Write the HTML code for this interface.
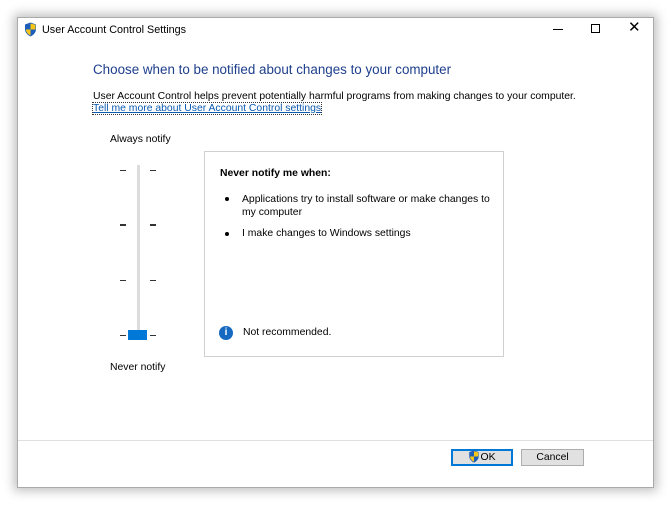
<!DOCTYPE html>
<html><head><style>
body{margin:0;width:671px;height:506px;background:#fff;position:relative;overflow:hidden;font-family:"Liberation Sans",sans-serif;font-size:10.4px;color:#000}
.a{position:absolute;white-space:nowrap}
.win{position:absolute;left:17px;top:17px;width:637px;height:471px;background:#fff;border:1px solid #aaa;box-sizing:border-box;box-shadow:0 0 10px 3px rgba(0,0,0,0.25)}
.tk{position:absolute;height:1px;background:#333;width:6px}
.btn{position:absolute;top:449px;height:17px;width:62px;background:#e1e1e1;border:1px solid #adadad;box-sizing:border-box;text-align:center;font-size:10.4px;line-height:15px}
</style></head><body>
<div class="win"></div>
<svg class="a" style="left:24px;top:22px" width="13" height="15" viewBox="0 0 13 15"><path d="M6.5 0.5 L12 2.5 V7 C12 10.5 9.5 13 6.5 14.5 C3.5 13 1 10.5 1 7 V2.5Z" fill="#1e5eb8"/><path d="M6.5 1.5 V7.5 H11.5 V2.8Z" fill="#f5c518"/><path d="M6.5 7.5 H1.8 C2.3 10.5 4 12.4 6.5 13.5Z" fill="#f5c518"/></svg>
<div class="a" style="left:42px;top:24px;font-size:10.8px">User Account Control Settings</div>
<div class="a" style="left:553px;top:29px;width:10px;height:1px;background:#000"></div>
<div class="a" style="left:591px;top:24px;width:9px;height:9px;border:1px solid #000;box-sizing:border-box"></div>
<div class="a" style="left:628px;top:18px;font-size:15px;line-height:20px">✕</div>
<div class="a" style="left:93px;top:62px;font-size:13.4px;color:#1e3f8c">Choose when to be notified about changes to your computer</div>
<div class="a" style="left:93px;top:91px">User Account Control helps prevent potentially harmful programs from making changes to your computer.</div>
<div class="a" style="left:93px;top:103px;color:#0a58b0;text-decoration:underline;outline:1px dotted #333">Tell me more about User Account Control settings</div>
<div class="a" style="left:110px;top:134px">Always notify</div>
<div class="a" style="left:110px;top:362px">Never notify</div>
<div class="a" style="left:137px;top:165px;width:3px;height:175px;background:#dcdcdc"></div>
<div class="tk" style="left:120px;top:170px"></div><div class="tk" style="left:150px;top:170px"></div>
<div class="tk" style="left:120px;top:224px;height:2px"></div><div class="tk" style="left:150px;top:224px;height:2px"></div>
<div class="tk" style="left:120px;top:280px"></div><div class="tk" style="left:150px;top:280px"></div>
<div class="tk" style="left:120px;top:335px"></div><div class="tk" style="left:150px;top:335px"></div>
<div class="a" style="left:128px;top:330px;width:19px;height:10px;background:#0078d7"></div>
<div class="a" style="left:204px;top:151px;width:300px;height:206px;border:1px solid #d0d0d0;box-sizing:border-box"></div>
<div class="a" style="left:220px;top:168px;font-weight:bold">Never notify me when:</div>
<div class="a" style="left:225px;top:197px;width:4px;height:4px;border-radius:50%;background:#000"></div>
<div class="a" style="left:242px;top:193px;line-height:13px">Applications try to install software or make changes to<br>my computer</div>
<div class="a" style="left:225px;top:232px;width:4px;height:4px;border-radius:50%;background:#000"></div>
<div class="a" style="left:242px;top:228px">I make changes to Windows settings</div>
<div class="a" style="left:219px;top:326px;width:14px;height:14px;border-radius:50%;background:#1669c1;color:#fff;font-weight:bold;font-size:10px;text-align:center;line-height:14px">i</div>
<div class="a" style="left:243px;top:327px">Not recommended.</div>
<div class="a" style="left:18px;top:440px;width:635px;height:1px;background:#dfdfdf"></div>
<div class="btn" style="left:451px;border:1px solid #0078d7;box-shadow:inset 0 0 0 1px #0078d7"><svg style="vertical-align:-3px" width="12" height="13" viewBox="0 0 13 15"><path d="M6.5 0.5 L12 2.5 V7 C12 10.5 9.5 13 6.5 14.5 C3.5 13 1 10.5 1 7 V2.5Z" fill="#1e5eb8"/><path d="M6.5 1.5 V7.5 H11.5 V2.8Z" fill="#f5c518"/><path d="M6.5 7.5 H1.8 C2.3 10.5 4 12.4 6.5 13.5Z" fill="#f5c518"/></svg>OK</div>
<div class="btn" style="left:521px;width:63px">Cancel</div>
</body></html>
